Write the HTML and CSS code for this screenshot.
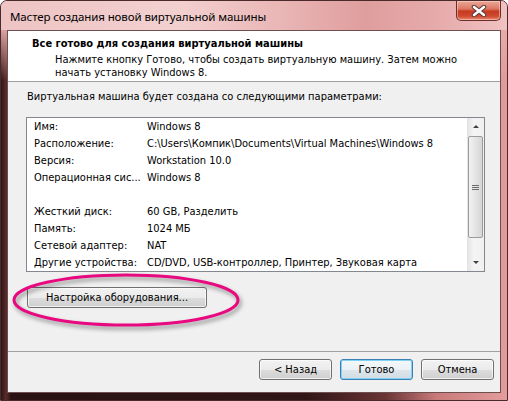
FILE: index.html
```html
<!DOCTYPE html>
<html lang="ru">
  <head>
    <meta charset="UTF-8" />
    <title>Мастер создания новой виртуальной машины</title>
    <link rel="stylesheet" href="styles.css">
  </head>
  <body>
    <div class="window">
      <div class="titlebar">
        <span class="title">Мастер создания новой виртуальной машины</span>
        <button class="close" aria-label="Закрыть">
          <svg width="16" height="12" viewBox="0 0 16 12">
            <path d="M3 2 L13 10 M13 2 L3 10" stroke="#5a3a3a" stroke-width="4.5" stroke-linecap="round" />
            <path d="M3 2 L13 10 M13 2 L3 10" stroke="#fff" stroke-width="2.5" stroke-linecap="round" />
          </svg>
        </button>
      </div>

      <div class="client">
        <div class="header">
          <div class="header-title">Все готово для создания виртуальной машины</div>
          <div class="header-sub">
            Нажмите кнопку Готово, чтобы создать виртуальную машину. Затем можно<br>
            начать установку Windows 8.
          </div>
        </div>

        <div class="content">
          <p class="intro">Виртуальная машина будет создана со следующими параметрами:</p>

          <div class="listbox">
            <div class="rows">
              <div class="row"><span class="key">Имя:</span><span>Windows 8</span></div>
              <div class="row"><span class="key">Расположение:</span><span>C:\Users\Компик\Documents\Virtual Machines\Windows 8</span></div>
              <div class="row"><span class="key">Версия:</span><span>Workstation 10.0</span></div>
              <div class="row"><span class="key">Операционная сис...</span><span>Windows 8</span></div>
              <div class="row"></div>
              <div class="row"><span class="key">Жесткий диск:</span><span>60 GB, Разделить</span></div>
              <div class="row"><span class="key">Память:</span><span>1024 МБ</span></div>
              <div class="row"><span class="key">Сетевой адаптер:</span><span>NAT</span></div>
              <div class="row"><span class="key">Другие устройства:</span><span>CD/DVD, USB-контроллер, Принтер, Звуковая карта</span></div>
            </div>
            <div class="scrollbar">
              <div class="arrow arrow-up"></div>
              <div class="track">
                <div class="thumb"><span class="grip"></span></div>
              </div>
              <div class="arrow arrow-down"></div>
            </div>
          </div>

          <button class="btn hw-btn">Настройка оборудования...</button>

          <!-- annotation ring drawn over the screenshot -->
          <svg class="ring" width="240" height="66" viewBox="0 0 240 66">
            <ellipse cx="116" cy="31" rx="112" ry="25" fill="none" stroke="#e8087f" stroke-width="3" />
          </svg>
        </div>

        <div class="footer">
          <button class="btn">&lt; Назад</button>
          <button class="btn btn-default">Готово</button>
          <button class="btn">Отмена</button>
        </div>
      </div>
    </div>
  </body>
</html>
```

FILE: styles.css
```css
body {
  margin: 0;
  background: #fff;
  font-family: "DejaVu Sans Condensed", "DejaVu Sans", sans-serif;
  font-size: 11px;
  color: #000;
}

.window {
  width: 508px;
  height: 401px;
  box-sizing: border-box;
  border: 1px solid #4a2a2a;
  border-radius: 7px 7px 0 0;
  display: flex;
  flex-direction: column;
  overflow: hidden;
  background:
    linear-gradient(to bottom, rgba(236, 186, 186, 1) 0, rgba(232, 172, 172, 0.9) 30px, rgba(232, 168, 168, 0) 80px),
    linear-gradient(to right, #2e1515 0, #5a2c2c 1%, #2a1212 2%, #301616 60%, #6a3434 76%, #c87a7a 86%, #e39c9c 100%);
}

/* title bar */
.titlebar {
  height: 29px;
  flex: none;
  display: flex;
  align-items: flex-start;
  background: linear-gradient(to right, #eec4c4 0%, #f3d0d0 35%, #eab6b6 55%, #df9e9e 72%, #e6aaaa 86%, #f0c2c2 100%);
}

.title {
  padding: 8px 0 0 9px;
  font-family: "Noto Sans", "Open Sans", sans-serif;
  font-size: 11.5px;
  letter-spacing: -0.1px;
}

.close {
  margin-left: auto;
  margin-right: 6px;
  width: 45px;
  height: 20px;
  padding: 0;
  border: 1px solid #6a2e2e;
  border-top: none;
  border-radius: 0 0 5px 5px;
  background: linear-gradient(to bottom, #eaa898 0%, #dd7a66 40%, #c63a22 55%, #cf4a30 80%, #e88a6e 100%);
  display: flex;
  align-items: center;
  justify-content: center;
  box-shadow: inset 0 0 0 1px rgba(255, 220, 210, 0.5);
}

/* client area */
.client {
  flex: 1;
  margin: 0 6px 7px 6px;
  border: 1px solid #6e4e4e;
  background: #f0f0f0;
  display: flex;
  flex-direction: column;
}

.header {
  height: 51px;
  flex: none;
  box-sizing: border-box;
  background: #fff;
  border-bottom: 1px solid #a0a0a0;
  padding: 6px 0 0 24px;
  line-height: 13px;
}

.header-title {
  font-weight: bold;
}

.header-sub {
  margin-top: 3px;
  padding-left: 23px;
}

.content {
  flex: 1;
  position: relative;
  padding: 8px 0 0 18px;
}

.intro {
  margin: 0 0 14px 1px;
  line-height: 13px;
}

.listbox {
  width: 459px;
  height: 155px;
  box-sizing: border-box;
  border: 1px solid #828790;
  background: #fff;
  display: flex;
}

.rows {
  flex: 1;
  padding-left: 7px;
}

.row {
  height: 17px;
  line-height: 17px;
  display: flex;
  white-space: nowrap;
}

.key {
  width: 113px;
  flex: none;
}

.scrollbar {
  width: 17px;
  display: flex;
  flex-direction: column;
  background: linear-gradient(to right, #e3e3e3, #f4f4f4 40%, #f0f0f0);
}

.arrow {
  height: 17px;
  flex: none;
  display: flex;
  align-items: center;
  justify-content: center;
}

.arrow::before {
  content: "";
  border-left: 3px solid transparent;
  border-right: 3px solid transparent;
}

.arrow-up::before {
  border-bottom: 3px solid #404040;
}

.arrow-down::before {
  border-top: 3px solid #404040;
}

.track {
  flex: 1;
  padding: 1px 1px 0 1px;
}

.thumb {
  height: 102px;
  box-sizing: border-box;
  border: 1px solid #9b9b9b;
  border-radius: 2px;
  background: linear-gradient(to right, #f2f2f2, #e4e4e4 50%, #d6d6d6);
  display: flex;
  align-items: center;
  justify-content: center;
}

.grip {
  width: 7px;
  height: 5px;
  background: repeating-linear-gradient(to bottom, #6a6a6a 0, #6a6a6a 1px, transparent 1px, transparent 2px);
}

/* buttons */
.btn {
  height: 21px;
  width: 73px;
  padding: 0;
  font-family: inherit;
  font-size: 11px;
  color: #000;
  border: 1px solid #707070;
  border-radius: 3px;
  background: linear-gradient(to bottom, #f2f2f2 0%, #ebebeb 50%, #dddddd 51%, #cfcfcf 100%);
  box-shadow: inset 0 0 0 1px rgba(255, 255, 255, 0.7);
}

.btn-default {
  border-color: #3c7fb1;
  box-shadow: inset 0 0 0 1px #7fd2f5;
  background: linear-gradient(to bottom, #f4f8fb 0%, #ebf1f5 50%, #dde6ec 51%, #d2dce3 100%);
}

.hw-btn {
  display: block;
  width: 180px;
  margin: 15px 0 0 1px;
}

.ring {
  position: absolute;
  left: 2px;
  top: 187px;
  filter: drop-shadow(2px 3px 2px rgba(0, 0, 0, 0.4));
}

.footer {
  height: 33px;
  flex: none;
  border-top: 1px solid #a0a0a0;
  display: flex;
  justify-content: flex-end;
  align-items: flex-start;
  gap: 8px;
  padding: 7px 6px 0 0;
}
```
